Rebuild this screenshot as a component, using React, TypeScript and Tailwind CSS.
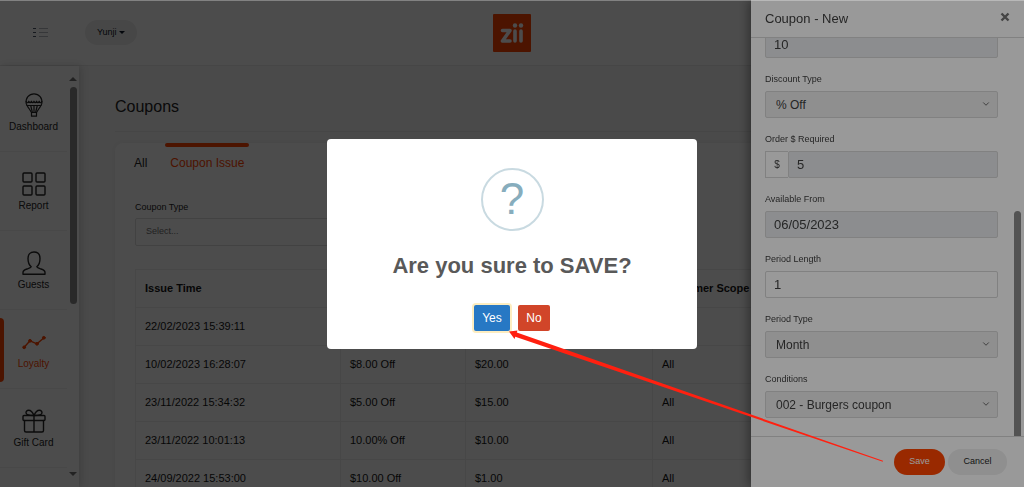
import { useState } from 'react';
import type { ReactNode } from 'react';
import { ChevronDown } from 'lucide-react';

const iconProps = {
  viewBox: '0 0 24 24',
  fill: 'none',
  stroke: 'currentColor',
  strokeLinecap: 'round' as const,
  strokeLinejoin: 'round' as const,
  className: 'size-6',
  'aria-hidden': true,
};

const BalloonIcon = () => (
  <svg {...iconProps} strokeWidth="1.2">
    <path d="M4.2 10.5C3.3 5 7 .8 12 .8s8.700 4.200 7.800 9.700c-.4 2-1.600 3.200-2.800 5l-2.500 4h-5l-2.500-4C5.800 13.700 4.600 12.500 4.200 10.500z" />
    <path d="M4.200 8.600c.9 1.600 1.900 1.600 2.600-.4.800 2 1.800 2 2.600 0 .8 2 1.800 2 2.600 0 .8 2 1.800 2 2.600 0 .8 2 1.800 2 2.600 0 .7 2 1.700 2 2.600.4" />
    <path d="M5 12.500h14M8.700 12.500l1.700 7M12 12.500v7M15.300 12.500l-1.700 7M9.500 19.500v3.700h5v-3.700" />
  </svg>
);

const GridIcon = () => (
  <svg {...iconProps} strokeWidth="1.400">
    <rect x="1" y="1" width="9" height="9" rx="1" />
    <rect x="14" y="1" width="9" height="9" rx="1" />
    <rect x="1" y="14" width="9" height="9" rx="1" />
    <rect x="14" y="14" width="9" height="9" rx="1" />
  </svg>
);

const GuestIcon = () => (
  <svg {...iconProps} strokeWidth="1.400">
    <path d="M9.200 15.800C7 14 6 11.500 6 7.500 6 3.500 8.300 1 12 1s6 2.500 6 6.500c0 4-1 6.500-3.200 8.300.5 1.200 2.200 1.600 4.200 2.200 2.800.8 4 1.700 4 3.500v1.700H1v-1.700c0-1.800 1.200-2.700 4-3.500 2-.6 3.700-1 4.200-2.200z" />
  </svg>
);

const TrendIcon = () => (
  <svg {...iconProps} strokeWidth="1.400">
    <path d="M2.200 17.300L8 10.800l7 3 7-6" />
    <g fill="currentColor" strokeWidth="1">
      <circle cx="2.200" cy="17.300" r="1.400" />
      <circle cx="8" cy="10.800" r="1.400" />
      <circle cx="15" cy="13.800" r="1.400" />
      <circle cx="21.800" cy="7.800" r="1.400" />
    </g>
  </svg>
);

const GiftIcon = () => (
  <svg {...iconProps} strokeWidth="1.400">
    <rect x="1" y="6.500" width="22" height="5" rx="1" />
    <path d="M2.500 11.500v10a1.500 1.500 0 001.500 1.500h16a1.500 1.500 0 001.500-1.500v-10M12 6.500V23" />
    <path d="M12 6.500C9.500 6.500 4 6.500 4 3.700 4 2.300 5 1.300 6.500 1.300 9.500 1.300 11 4 12 6.500zM12 6.500c2.500 0 8 0 8-2.800 0-1.400-1-2.400-2.500-2.400-3 0-4.500 2.700-5.500 5.200z" />
  </svg>
);

const menu = [
  { label: 'Dashboard', icon: <BalloonIcon /> },
  { label: 'Report', icon: <GridIcon /> },
  { label: 'Guests', icon: <GuestIcon /> },
  { label: 'Loyalty', icon: <TrendIcon />, active: true },
  { label: 'Gift Card', icon: <GiftIcon /> },
];

const coupons = [
  { time: '22/02/2023 15:39:11', discount: '', required: '', scope: '' },
  { time: '10/02/2023 16:28:07', discount: '$8.00 Off', required: '$20.00', scope: 'All' },
  { time: '23/11/2022 15:34:32', discount: '$5.00 Off', required: '$15.00', scope: 'All' },
  { time: '23/11/2022 10:01:13', discount: '10.00% Off', required: '$10.00', scope: 'All' },
  { time: '24/09/2022 15:53:00', discount: '$10.00 Off', required: '$1.00', scope: 'All' },
];

const Header = () => (
  <header className="relative flex h-[66px] shrink-0 items-center border-b border-[#eaeaea] bg-white pl-8">
    <button aria-label="Toggle menu" className="text-gray-600">
      <svg viewBox="0 0 17 11" className="h-[11px] w-[17px]" stroke="currentColor" aria-hidden="true">
        <path d="M1 1.500h3M1 5.500h3M1 9.500h3" />
        <path d="M7 1.500h9M7 5.500h9M7 9.500h9" strokeOpacity="0.400" />
      </svg>
    </button>
    <button className="ml-9 flex h-[25px] items-center gap-0.5 rounded-full bg-[#eeeeee] px-3 text-[9px] text-gray-900">
      Yunji
      <svg viewBox="0 0 6 3" className="h-[3px] w-1.5" fill="currentColor" aria-hidden="true">
        <path d="M0 0h6L3 3z" />
      </svg>
    </button>
    <a href="#home" aria-label="zii" className="absolute top-3.5 left-1/2 -ml-[19px]">
      <svg viewBox="0 0 38 38" className="size-[38px]" aria-hidden="true">
        <rect width="38" height="38" rx="1" fill="#ff4500" />
        <g fill="none" stroke="#fff" strokeWidth="3.600" strokeLinecap="round" strokeLinejoin="round">
          <path d="M9.500 16.500h7.500l-7.500 10.500h7.500" />
          <path d="M22 17v10M28 17v10" />
        </g>
        <circle cx="22" cy="11.500" r="2.200" fill="#fff" />
        <circle cx="28" cy="11.500" r="2.200" fill="#fff" />
      </svg>
    </a>
  </header>
);

const Sidebar = () => (
  <aside className="z-10 flex w-[79px] shrink-0 bg-white shadow-[2px_0_8px_rgba(0,0,0,0.16)]">
    <nav className="w-[67px] pt-[7px]">
      {menu.map((item) => (
        <a
          key={item.label}
          href="#menu"
          className={`relative flex h-[79px] flex-col items-center border-b border-[#f0f0f0] pt-5 text-[10px] leading-3 ${
            item.active ? 'text-[#ff4500]' : 'text-neutral-800'
          }`}
        >
          {item.active && <span className="absolute top-2 left-0 h-16 w-1 rounded-r-sm bg-[#ff4500]" />}
          {item.icon}
          <span className="mt-1">{item.label}</span>
        </a>
      ))}
    </nav>
    <div className="flex flex-1 flex-col items-center pt-[11px] pb-[11px] text-neutral-500">
      <svg viewBox="0 0 8 4" className="h-1 w-2" fill="currentColor" aria-hidden="true">
        <path d="M0 4L4 0l4 4z" />
      </svg>
      <div className="mt-1.5 h-[217px] w-[7px] rounded-full bg-[#8a8a8a]" />
      <svg viewBox="0 0 8 4" className="mt-auto h-1 w-2" fill="currentColor" aria-hidden="true">
        <path d="M0 0h8L4 4z" />
      </svg>
    </div>
  </aside>
);

const CouponList = () => (
  <main className="flex-1 overflow-hidden bg-[#f8f8f8] px-9 pt-[29px]">
    <h1 className="border-b border-[#eaeaea] pb-3 text-base leading-6 text-neutral-800">Coupons</h1>
    <section className="mt-[11px] rounded-t-lg bg-white shadow-[0_0_4px_rgba(0,0,0,0.05)]">
      <div className="flex gap-[18px] px-[19px] text-[12px] leading-4">
        <button className="pt-3 text-neutral-800">All</button>
        <button className="relative px-[5px] pt-3 text-[#ff4500]">
          <span className="absolute inset-x-0 top-0 h-1 rounded-sm bg-[#ff4500]" />
          Coupon Issue
        </button>
      </div>
      <div className="px-5 pt-[30px]">
        <label htmlFor="coupon-type" className="block text-[9px] leading-3 text-neutral-800">
          Coupon Type
        </label>
        <select
          id="coupon-type"
          className="mt-[5px] block h-7 w-[300px] appearance-none rounded-xs border border-[#dddddd] px-2.5 text-[9px] text-neutral-500"
        >
          <option>Select...</option>
        </select>
        <table className="mt-[23px] w-full table-fixed border-collapse text-left text-[11px] text-neutral-900">
          <thead>
            <tr className="h-[38px]">
              <th className="w-[205px] border border-[#efefef] px-[9px]">Issue Time</th>
              <th className="w-[125px] border border-[#efefef] px-[9px]">Discount</th>
              <th className="w-[187px] border border-[#efefef] px-[9px]">Required</th>
              <th className="border border-[#efefef] px-[9px] whitespace-nowrap">Customer Scope</th>
            </tr>
          </thead>
          <tbody>
            {coupons.map((row) => (
              <tr key={row.time} className="h-[38px]">
                <td className="border border-[#efefef] px-[9px]">{row.time}</td>
                <td className="border border-[#efefef] px-[9px]">{row.discount}</td>
                <td className="border border-[#efefef] px-[9px]">{row.required}</td>
                <td className="border border-[#efefef] px-[9px]">{row.scope}</td>
              </tr>
            ))}
          </tbody>
        </table>
      </div>
    </section>
  </main>
);

const Field = ({ id, label, children }: { id: string; label: string; children: ReactNode }) => (
  <div className="shrink-0">
    <label htmlFor={id} className="block text-[9px] leading-3 text-neutral-700">
      {label}
    </label>
    <div className="mt-1.5 flex h-[27px]">{children}</div>
  </div>
);

type TextInputProps = { id: string; value: string; label?: string; disabled?: boolean };

const TextInput = ({ id, value, label, disabled }: TextInputProps) => (
  <input
    id={id}
    aria-label={label}
    defaultValue={value}
    disabled={disabled}
    className="w-full min-w-0 rounded-xs border border-[#d8d8d8] bg-white px-2 text-[13px] text-neutral-700 disabled:bg-[#e9ecef]"
  />
);

const SelectInput = ({ id, value }: { id: string; value: string }) => (
  <div className="relative w-full">
    <select
      id={id}
      disabled
      className="size-full appearance-none rounded-xs border border-[#d8d8d8] bg-[#eeeeee] px-2.5 text-[12px] text-neutral-700 opacity-100"
    >
      <option>{value}</option>
    </select>
    <ChevronDown className="absolute top-2 right-[7px] size-2.5 text-neutral-600" />
  </div>
);

const CouponDrawer = () => (
  <aside className="fixed inset-y-0 right-0 z-30 flex w-[273px] flex-col bg-white shadow-[-2px_0_10px_rgba(0,0,0,0.4)]">
    <div className="flex h-[38px] shrink-0 items-center justify-between border-b border-[#d8d8d8] px-3.5">
      <h2 className="text-[13px] text-neutral-700">Coupon - New</h2>
      <button aria-label="Close" className="pb-1 text-neutral-500">
        <svg viewBox="0 0 10 10" className="size-2.5" stroke="currentColor" strokeWidth="2.400" aria-hidden="true">
          <path d="M1.500 1.500l7 7M8.500 1.500l-7 7" />
        </svg>
      </button>
    </div>
    <div className="flex min-h-0 flex-1">
      <div className="flex flex-1 flex-col justify-end gap-[15px] overflow-hidden pr-4 pb-[18px] pl-3.5">
        <div className="flex h-[27px] shrink-0">
          <TextInput id="discount" label="Discount" value="10" disabled />
        </div>
        <Field id="discount-type" label="Discount Type">
          <SelectInput id="discount-type" value="% Off" />
        </Field>
        <Field id="order-required" label="Order $ Required">
          <span className="flex w-[23px] shrink-0 items-center justify-center border border-r-0 border-[#d8d8d8] text-[10px] text-neutral-700">
            $
          </span>
          <TextInput id="order-required" value="5" disabled />
        </Field>
        <Field id="available-from" label="Available From">
          <TextInput id="available-from" value="06/05/2023" disabled />
        </Field>
        <Field id="period-length" label="Period Length">
          <TextInput id="period-length" value="1" />
        </Field>
        <Field id="period-type" label="Period Type">
          <SelectInput id="period-type" value="Month" />
        </Field>
        <Field id="conditions" label="Conditions">
          <SelectInput id="conditions" value="002 - Burgers coupon" />
        </Field>
      </div>
      <div className="flex w-2.5 items-end">
        <div className="h-[225px] w-[7px] rounded-t-full bg-[#8a8a8a]" />
      </div>
    </div>
    <div className="flex h-[51px] shrink-0 items-center justify-end gap-[3px] border-t border-[#d8d8d8] pr-[17px] text-[9px]">
      <button className="h-[26px] w-[51px] rounded-full bg-[#ff4500] text-white">Save</button>
      <button className="h-[26px] w-[59px] rounded-full bg-[#eeeeee] text-neutral-800">Cancel</button>
    </div>
  </aside>
);

const ConfirmDialog = ({ onClose }: { onClose: () => void }) => (
  <div className="fixed inset-0 z-40 flex items-center justify-center bg-black/40">
    <div
      role="dialog"
      aria-labelledby="confirm-title"
      className="flex w-[370px] flex-col items-center rounded bg-white pt-[29px] pb-[18px]"
    >
      <div className="flex size-[63px] items-center justify-center rounded-full border-2 border-[#c9dae1] text-[44px] leading-none text-[#87adbd]">
        ?
      </div>
      <h2 id="confirm-title" className="mt-[21px] text-[22px] leading-7 font-bold text-[#595959]">
        Are you sure to SAVE?
      </h2>
      <div className="mt-[25px] flex gap-2 text-[12px] text-white">
        <button onClick={onClose} className="h-[26px] w-9 rounded-xs bg-[#2778c4] ring-2 ring-[#fdedc0]">
          Yes
        </button>
        <button onClick={onClose} className="h-[26px] w-8 rounded-xs bg-[#d14529]">
          No
        </button>
      </div>
    </div>
  </div>
);

const Arrow = () => (
  <svg
    viewBox="0 0 1024 487"
    className="pointer-events-none fixed inset-0 z-50 size-full"
    fill="#ff2010"
    aria-hidden="true"
  >
    <path d="M509 331.500L517.500 330.500L516.800 332.500L883 460.800L882.800 461.700L515.300 336.800L514.500 339z" />
  </svg>
);

const App = () => {
  const [confirming, setConfirming] = useState(true);

  return (
    <div className="flex h-screen flex-col overflow-hidden font-['Liberation_Sans',Arial,sans-serif]">
      <Header />
      <div className="flex min-h-0 flex-1">
        <Sidebar />
        <CouponList />
      </div>
      <div className="fixed inset-0 z-20 bg-black/50" />
      <CouponDrawer />
      {confirming && <ConfirmDialog onClose={() => setConfirming(false)} />}
      <Arrow />
      <div className="fixed inset-x-0 top-0 z-50 h-px bg-white/30" />
    </div>
  );
};

export default App;
